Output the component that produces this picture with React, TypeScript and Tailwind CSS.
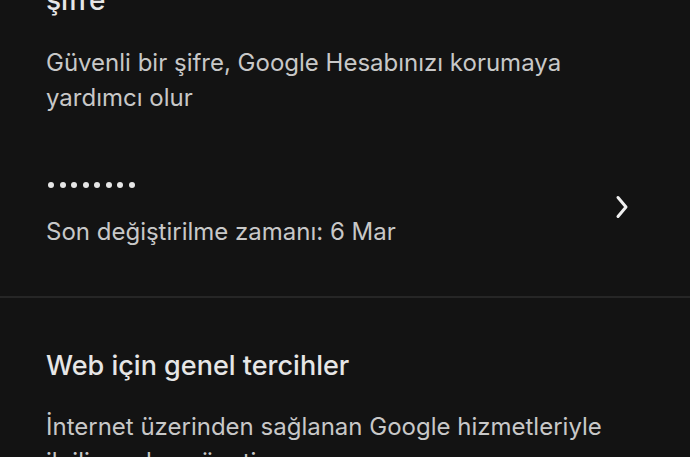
import React from "react";

export default function App() {
  return (
    <div className="w-[690px] h-[457px] overflow-hidden bg-[#131313] text-[#e3e3e3]" style={{ fontFamily: "Inter, Roboto, 'Noto Sans', sans-serif" }}>
      <div className="px-[46px] -mt-[18px]">
        <div className="text-[28px] leading-[36px] font-medium text-[#e6e6e6]">şifre</div>
        <div className="mt-[27px] text-[24px] leading-[35px] text-[#c8c8c8]">
          Güvenli bir şifre, Google Hesabınızı korumaya
          <br />
          yardımcı olur
        </div>
      </div>
      <div className="flex items-center pl-[46px] pr-[60px] mt-[60px]">
        <div className="flex-1">
          <div className="flex gap-[5.5px] pl-[2px] h-[20px] items-center">
            {Array.from({ length: 8 }).map((_, i) => (
              <span key={i} className="block w-[6px] h-[6px] rounded-full bg-[#e6e6e6]" />
            ))}
          </div>
          <div className="mt-[19px] text-[24px] leading-[35px] text-[#c8c8c8]">Son değiştirilme zamanı: 6 Mar</div>
        </div>
        <svg width="16" height="26" viewBox="0 0 16 26" className="-mt-[10px]">
          <path d="M4 3.5 L12 13 L4 22.5" fill="none" stroke="#f0f0f0" strokeWidth="3" strokeLinecap="round" strokeLinejoin="round" />
        </svg>
      </div>
      <div className="mt-[47px] h-[2px] bg-[#262626]" />
      <div className="px-[46px]">
        <div className="mt-[50px] text-[27px] leading-[36px] font-medium text-[#e6e6e6]">Web için genel tercihler</div>
        <div className="mt-[25px] text-[24px] leading-[35px] text-[#c8c8c8]">
          İnternet üzerinden sağlanan Google hizmetleriyle
          <br />
          ilgili ayarları yönetin
        </div>
      </div>
    </div>
  );
}
